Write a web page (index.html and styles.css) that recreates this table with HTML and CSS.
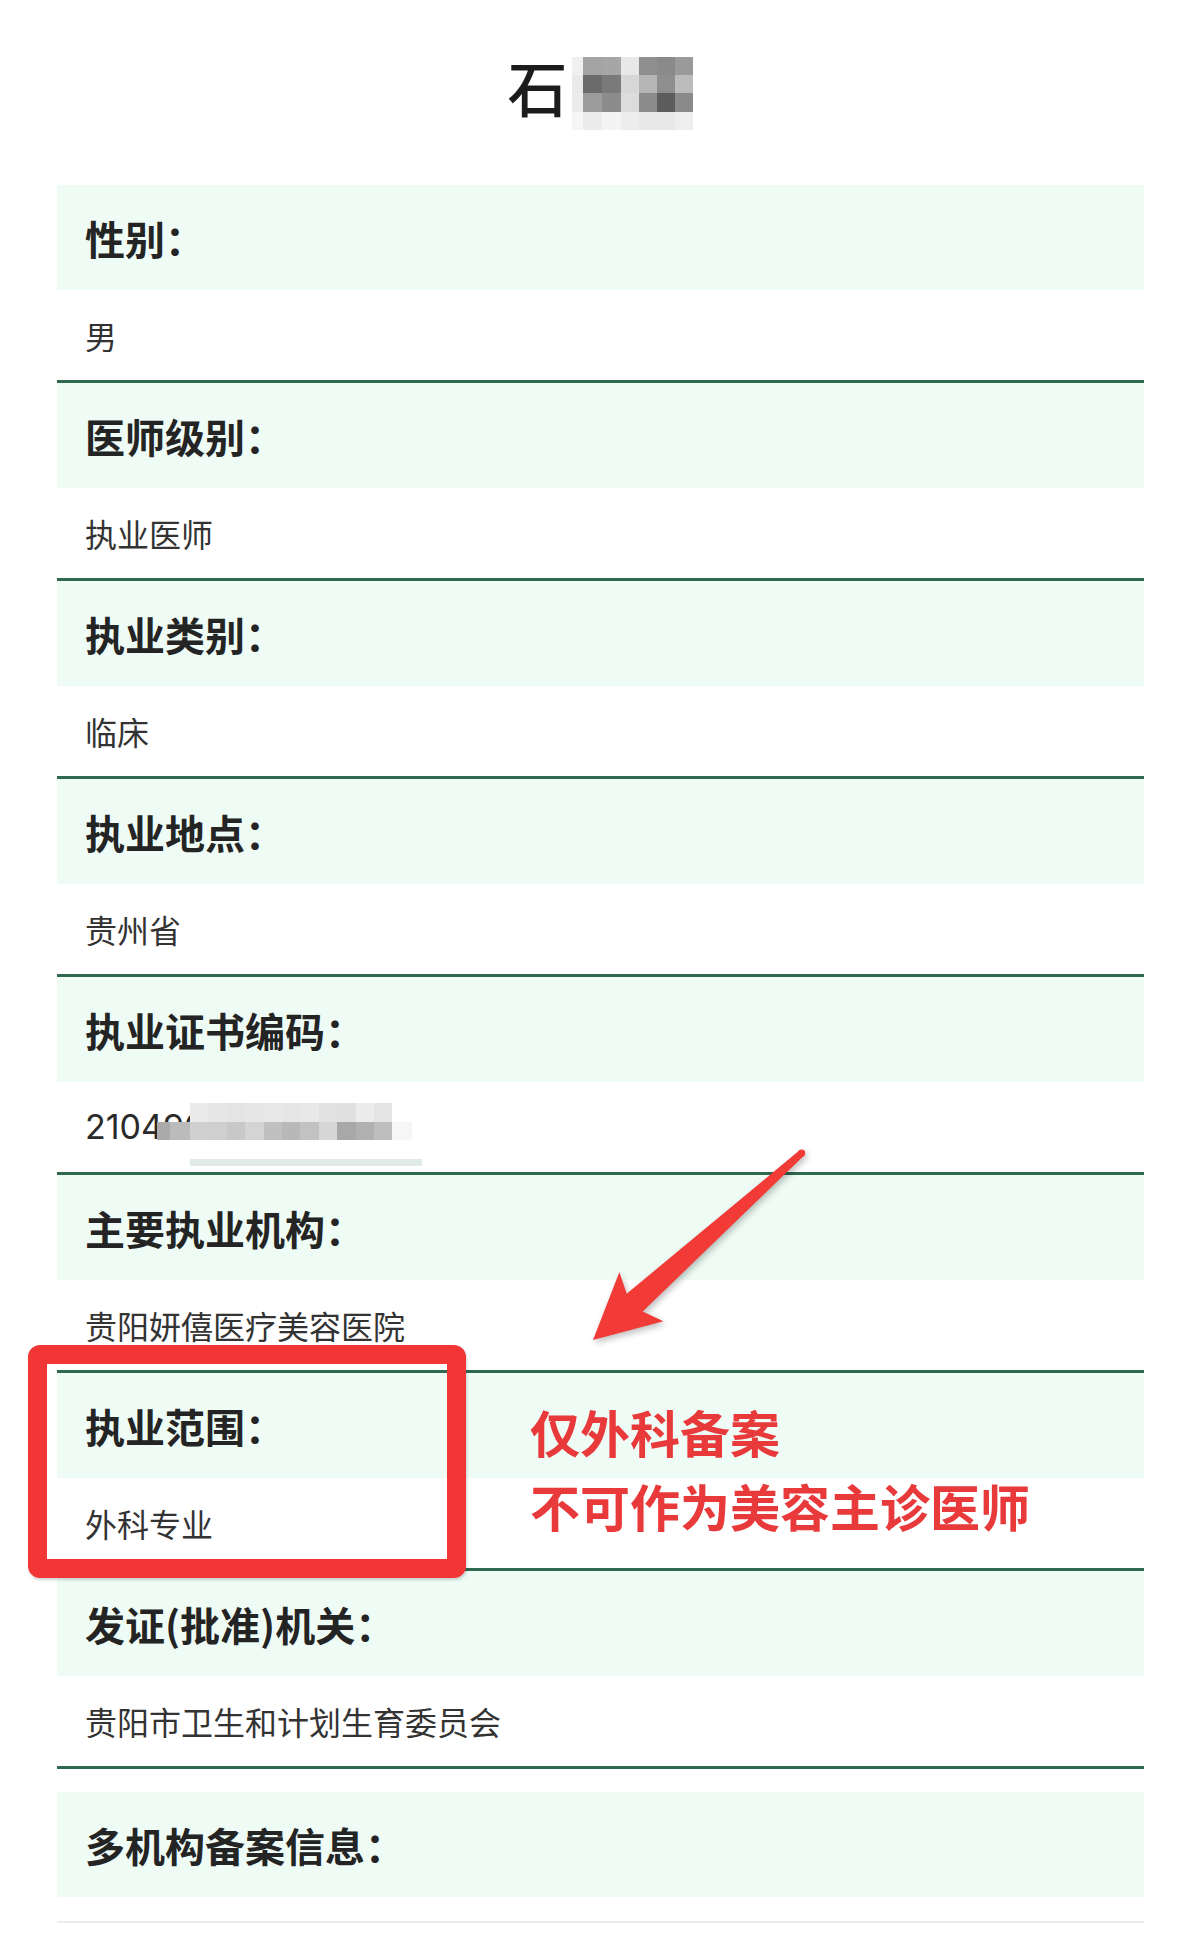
FILE: index.html
```html
<!DOCTYPE html>
<html lang="zh-CN">
<head>
<meta charset="utf-8">
<title>医师信息</title>
<link rel="stylesheet" href="styles.css">
</head>
<body>
<div class="page">
  <header class="title">
    <h1 class="name">石</h1>
    <div class="mosaic name-mosaic" aria-hidden="true">
      <span></span><span></span><span></span><span></span><span></span><span></span><span></span>
      <span></span><span></span><span></span><span></span><span></span><span></span><span></span>
      <span></span><span></span><span></span><span></span><span></span><span></span><span></span>
      <span></span><span></span><span></span><span></span><span></span><span></span><span></span>
    </div>
  </header>

  <dl class="info">
    <div class="item">
      <dt class="label">性别：</dt>
      <dd class="value">男</dd>
    </div>
    <div class="item">
      <dt class="label">医师级别：</dt>
      <dd class="value">执业医师</dd>
    </div>
    <div class="item">
      <dt class="label">执业类别：</dt>
      <dd class="value">临床</dd>
    </div>
    <div class="item">
      <dt class="label">执业地点：</dt>
      <dd class="value">贵州省</dd>
    </div>
    <div class="item">
      <dt class="label">执业证书编码：</dt>
      <dd class="value value-num">
        <span class="num">210490</span>
        <div class="mosaic num-mosaic" aria-hidden="true">
          <span></span><span></span><span></span><span></span><span></span><span></span><span></span><span></span><span></span><span></span><span></span><span></span><span></span><span></span>
          <span></span><span></span><span></span><span></span><span></span><span></span><span></span><span></span><span></span><span></span><span></span><span></span><span></span><span></span>
        </div>
        <span class="num-bar"></span>
      </dd>
    </div>
    <div class="item">
      <dt class="label">主要执业机构：</dt>
      <dd class="value">贵阳妍僖医疗美容医院</dd>
    </div>
    <div class="item">
      <dt class="label">执业范围：</dt>
      <dd class="value">外科专业</dd>
    </div>
    <div class="item">
      <dt class="label">发证(批准)机关：</dt>
      <dd class="value">贵阳市卫生和计划生育委员会</dd>
    </div>
    <div class="item item-last">
      <dt class="label">多机构备案信息：</dt>
      <dd class="value value-empty"></dd>
    </div>
  </dl>

  <div class="mark-box"></div>
  <svg class="mark-arrow" viewBox="0 0 1200 1954" width="1200" height="1954" aria-hidden="true">
    <g class="arrow-shape">
      <polygon points="593,1340 663.4,1321.2 642.7,1311.5 803.9,1155.8 799.3,1150.6 626.7,1293.7 619.4,1272"/>
      <circle cx="801.6" cy="1153.2" r="3.6"/>
    </g>
  </svg>
  <p class="mark-text">仅外科备案<br>不可作为美容主诊医师</p>
</div>
</body>
</html>
```

FILE: styles.css
```css
* {
  box-sizing: border-box;
}

body {
  margin: 0;
  background: #ffffff;
  font-family: "Noto Sans CJK SC", "Noto Sans", sans-serif;
  color: #222222;
}

.page {
  position: relative;
  width: 1200px;
  min-height: 1954px;
}

/* ---------- title ---------- */
.title {
  display: flex;
  justify-content: center;
  align-items: flex-start;
  gap: 4px;
  padding-top: 56px;
}

.name {
  margin: 0;
  font-size: 60px;
  line-height: 60px;
  font-weight: 500;
  color: #1c1c1c;
}

.mosaic {
  display: grid;
}

.name-mosaic {
  margin-top: 1px;
  grid-template-columns: 11px 19px 19px 18px 18px 18px 18px;
  grid-template-rows: 18px 18px 19px 18px;
}

.name-mosaic span:nth-child(1)  { background: #f0f0f0; }
.name-mosaic span:nth-child(2)  { background: #a4a4a4; }
.name-mosaic span:nth-child(3)  { background: #a6a6a6; }
.name-mosaic span:nth-child(4)  { background: #e8e8e8; }
.name-mosaic span:nth-child(5)  { background: #8f8f8f; }
.name-mosaic span:nth-child(6)  { background: #8a8a8a; }
.name-mosaic span:nth-child(7)  { background: #9a9a9a; }
.name-mosaic span:nth-child(8)  { background: #eaeaea; }
.name-mosaic span:nth-child(9)  { background: #6b6b6b; }
.name-mosaic span:nth-child(10) { background: #7a7a7a; }
.name-mosaic span:nth-child(11) { background: #d7d7d7; }
.name-mosaic span:nth-child(12) { background: #b5b5b5; }
.name-mosaic span:nth-child(13) { background: #8e8e8e; }
.name-mosaic span:nth-child(14) { background: #bcbcbc; }
.name-mosaic span:nth-child(15) { background: #ececec; }
.name-mosaic span:nth-child(16) { background: #9c9c9c; }
.name-mosaic span:nth-child(17) { background: #8c8c8c; }
.name-mosaic span:nth-child(18) { background: #dcdcdc; }
.name-mosaic span:nth-child(19) { background: #8c8c8c; }
.name-mosaic span:nth-child(20) { background: #5c5c5c; }
.name-mosaic span:nth-child(21) { background: #8a8a8a; }
.name-mosaic span:nth-child(22) { background: #f6f6f6; }
.name-mosaic span:nth-child(23) { background: #ececec; }
.name-mosaic span:nth-child(24) { background: #f4f4f4; }
.name-mosaic span:nth-child(25) { background: #ededed; }
.name-mosaic span:nth-child(26) { background: #e8e8e8; }
.name-mosaic span:nth-child(27) { background: #e8e8e8; }
.name-mosaic span:nth-child(28) { background: #eeeeee; }

/* ---------- info list ---------- */
.info {
  margin: 55px 56px 0 57px;
}

.item {
  border-bottom: 3px solid #2f6a50;
}

.label {
  height: 105px;
  display: flex;
  align-items: center;
  margin: 0;
  padding-left: 28px;
  background: #effcf6;
  font-size: 40px;
  font-weight: 700;
  line-height: 1;
  color: #242424;
}

.value {
  position: relative;
  height: 90px;
  display: flex;
  align-items: center;
  margin: 0;
  padding-left: 28px;
  font-size: 32px;
  line-height: 1;
  color: #333333;
}

.num {
  font-family: "Inter", "Liberation Sans", sans-serif;
  font-size: 34px;
  color: #2a2a2a;
}

.num-mosaic {
  position: absolute;
  left: 100px;
  top: 21px;
  grid-template-columns: 13px 20px repeat(11, 18.4px) 20px;
  grid-template-rows: 19px 18px;
}

.num-mosaic span:nth-child(1),
.num-mosaic span:nth-child(2),
.num-mosaic span:nth-child(14) { background: transparent; }
.num-mosaic span:nth-child(3)  { background: #eaeaea; }
.num-mosaic span:nth-child(4)  { background: #e6e6e6; }
.num-mosaic span:nth-child(5)  { background: #e4e4e4; }
.num-mosaic span:nth-child(6)  { background: #e6e6e6; }
.num-mosaic span:nth-child(7)  { background: #e8e8e8; }
.num-mosaic span:nth-child(8)  { background: #e6e6e6; }
.num-mosaic span:nth-child(9)  { background: #e8e8e8; }
.num-mosaic span:nth-child(10) { background: #e2e2e2; }
.num-mosaic span:nth-child(11) { background: #e0e0e0; }
.num-mosaic span:nth-child(12) { background: #ececec; }
.num-mosaic span:nth-child(13) { background: #e4e4e4; }
.num-mosaic span:nth-child(15) { background: #aaaaaa; }
.num-mosaic span:nth-child(16) { background: #bbbbbb; }
.num-mosaic span:nth-child(17) { background: #d0d0d0; }
.num-mosaic span:nth-child(18) { background: #cfcfcf; }
.num-mosaic span:nth-child(19) { background: #c8c8c8; }
.num-mosaic span:nth-child(20) { background: #d4d4d4; }
.num-mosaic span:nth-child(21) { background: #c0c0c0; }
.num-mosaic span:nth-child(22) { background: #b8b8b8; }
.num-mosaic span:nth-child(23) { background: #c2c2c2; }
.num-mosaic span:nth-child(24) { background: #d6d6d6; }
.num-mosaic span:nth-child(25) { background: #a8a8a8; }
.num-mosaic span:nth-child(26) { background: #b0b0b0; }
.num-mosaic span:nth-child(27) { background: #bdbdbd; }
.num-mosaic span:nth-child(28) { background: #f6f6f6; }

.num-bar {
  position: absolute;
  left: 133px;
  top: 77px;
  width: 232px;
  height: 7px;
  background: #e0ebe6;
}

.item-last {
  margin-top: 23px;
  border-bottom: 2px solid #ececec;
}

.value-empty {
  height: 24px;
}

/* ---------- annotations (overlay) ---------- */
.mark-box {
  position: absolute;
  left: 28px;
  top: 1345px;
  width: 438px;
  height: 233px;
  border: 19px solid #f23535;
  border-radius: 12px;
  box-shadow: 1px 2px 3px rgba(0, 0, 0, 0.18);
}

.mark-arrow {
  position: absolute;
  left: 0;
  top: 0;
  pointer-events: none;
}

.arrow-shape {
  fill: #f23a36;
  filter: drop-shadow(2px 3px 3px rgba(0, 0, 0, 0.25));
}

.mark-text {
  position: absolute;
  left: 530px;
  top: 1394px;
  margin: 0;
  font-size: 50px;
  line-height: 74px;
  font-weight: 700;
  color: #e8393b;
}
```
